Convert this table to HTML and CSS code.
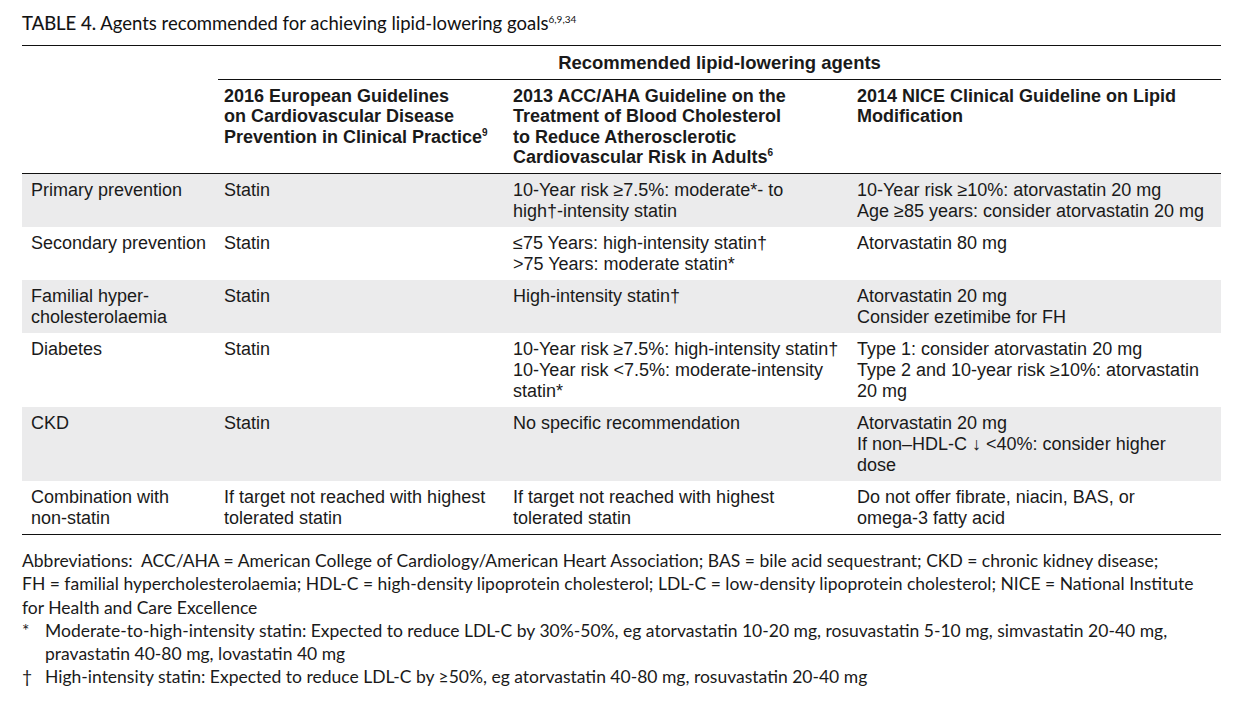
FILE: index.html
```html
<!DOCTYPE html>
<html>
<head>
<meta charset="utf-8">
<link rel="stylesheet" href="styles.css">
</head>
<body>
<div class="page">
  <h1 class="title"><span class="tlabel">TABLE 4.</span> Agents recommended for achieving lipid-lowering goals<sup>6,9,34</sup></h1>
  <table class="tbl">
    <colgroup>
      <col class="c1"><col class="c2"><col class="c3"><col class="c4">
    </colgroup>
    <thead>
      <tr class="super">
        <th></th>
        <th colspan="3" class="span">Recommended lipid-lowering agents</th>
      </tr>
      <tr class="heads">
        <th></th>
        <th>2016 European Guidelines<br>on Cardiovascular Disease<br>Prevention in Clinical Practice<sup>9</sup></th>
        <th>2013 ACC/AHA Guideline on the<br>Treatment of Blood Cholesterol<br>to Reduce Atherosclerotic<br>Cardiovascular Risk in Adults<sup>6</sup></th>
        <th>2014 NICE Clinical Guideline on Lipid<br>Modification</th>
      </tr>
    </thead>
    <tbody>
      <tr class="shade">
        <td>Primary prevention</td>
        <td>Statin</td>
        <td>10-Year risk ≥7.5%: moderate*- to<br>high†-intensity statin</td>
        <td>10-Year risk ≥10%: atorvastatin 20 mg<br>Age ≥85 years: consider atorvastatin 20 mg</td>
      </tr>
      <tr>
        <td>Secondary prevention</td>
        <td>Statin</td>
        <td>≤75 Years: high-intensity statin†<br>&gt;75 Years: moderate statin*</td>
        <td>Atorvastatin 80 mg</td>
      </tr>
      <tr class="shade">
        <td>Familial hyper-<br>cholesterolaemia</td>
        <td>Statin</td>
        <td>High-intensity statin†</td>
        <td>Atorvastatin 20 mg<br>Consider ezetimibe for FH</td>
      </tr>
      <tr>
        <td>Diabetes</td>
        <td>Statin</td>
        <td>10-Year risk ≥7.5%: high-intensity statin†<br>10-Year risk &lt;7.5%: moderate-intensity<br>statin*</td>
        <td>Type 1: consider atorvastatin 20 mg<br>Type 2 and 10-year risk ≥10%: atorvastatin<br>20 mg</td>
      </tr>
      <tr class="shade">
        <td>CKD</td>
        <td>Statin</td>
        <td>No specific recommendation</td>
        <td>Atorvastatin 20 mg<br>If non–HDL-C ↓ &lt;40%: consider higher<br>dose</td>
      </tr>
      <tr class="last">
        <td>Combination with<br>non-statin</td>
        <td>If target not reached with highest<br>tolerated statin</td>
        <td>If target not reached with highest<br>tolerated statin</td>
        <td>Do not offer fibrate, niacin, BAS, or<br>omega-3 fatty acid</td>
      </tr>
    </tbody>
  </table>
  <div class="notes">
    <p class="abbr">Abbreviations:&nbsp; ACC/AHA = American College of Cardiology/American Heart Association; BAS = bile acid sequestrant; CKD = chronic kidney disease;<br>FH = familial hypercholesterolaemia; HDL-C = high-density lipoprotein cholesterol; LDL-C = low-density lipoprotein cholesterol; NICE = National Institute<br>for Health and Care Excellence</p>
    <div class="fn"><span class="mark">*</span><span class="ftext">Moderate-to-high-intensity statin: Expected to reduce LDL-C by 30%-50%, eg atorvastatin 10-20 mg, rosuvastatin 5-10 mg, simvastatin 20-40 mg,<br>pravastatin 40-80 mg, lovastatin 40 mg</span></div>
    <div class="fn"><span class="mark">†</span><span class="ftext">High-intensity statin: Expected to reduce LDL-C by ≥50%, eg atorvastatin 40-80 mg, rosuvastatin 20-40 mg</span></div>
  </div>
</div>
</body>
</html>
```

FILE: styles.css
```css
html, body {
  margin: 0;
  padding: 0;
  background: #ffffff;
}
.page {
  padding: 12px 29px 0 22px;
  color: #1a1a1a;
}
.title {
  margin: 0;
  font-family: "Lato", "Open Sans", sans-serif;
  font-weight: 400;
  font-size: 18.5px;
  line-height: 22px;
  color: #111;
  white-space: nowrap;
}
.title .tlabel {
  font-weight: 400;
  -webkit-text-stroke: 0.15px #111;
}
.title sup {
  font-size: 10px;
  vertical-align: 7px;
  line-height: 0;
}
.tbl {
  width: 1199px;
  margin-top: 11px;
  border-collapse: collapse;
  table-layout: fixed;
  font-family: "Liberation Sans", Arial, sans-serif;
  font-size: 18px;
  line-height: 21px;
  color: #1a1a1a;
  border-top: 1.5px solid #111;
}
.c1 { width: 196px; }
.c2 { width: 289px; }
.c3 { width: 344px; }
.c4 { width: 370px; }
.tbl th {
  text-align: left;
  font-weight: 700;
  vertical-align: top;
  white-space: nowrap;
}
.super th {
  padding: 7px 0 6px;
  line-height: 20px;
  font-size: 18.5px;
}
.super th.span {
  text-align: center;
  border-bottom: 1.5px solid #111;
}
.heads th {
  padding: 6px 2px 6px 6px;
  line-height: 20.3px;
  border-bottom: 1.5px solid #111;
}
.tbl sup {
  font-size: 10px;
  vertical-align: 7px;
  line-height: 0;
}
.tbl td {
  vertical-align: top;
  padding: 6px 2px 5px 6px;
  white-space: nowrap;
}
.tbl td:first-child {
  padding-left: 9px;
}
.shade td {
  background: #ebebec;
}
.last td {
  border-bottom: 1.5px solid #111;
}
.notes {
  margin-top: 14px;
  font-family: "Lato", "Open Sans", sans-serif;
  font-size: 17.5px;
  line-height: 23.2px;
  color: #1a1a1a;
  white-space: nowrap;
}
.abbr {
  margin: 0;
}
.fn {
  display: flex;
}
.fn .mark {
  width: 23px;
  flex: none;
}
```
